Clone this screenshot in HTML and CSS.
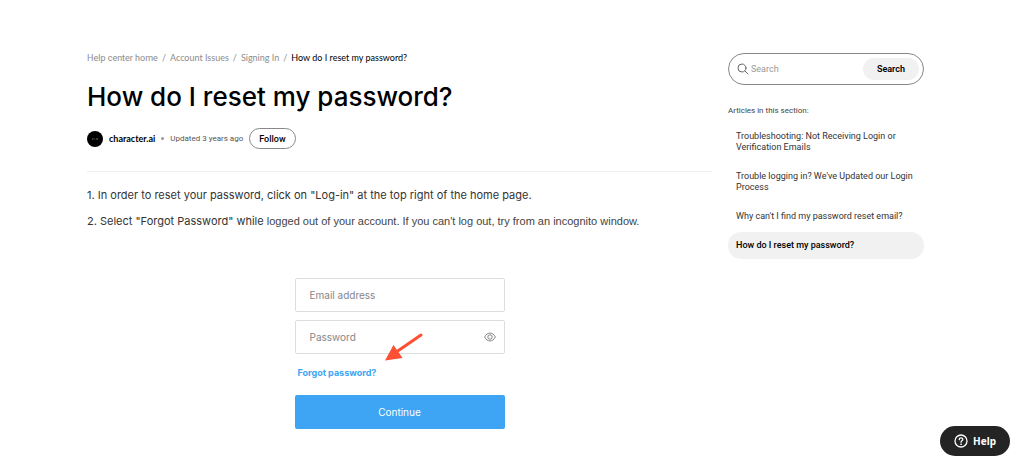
FILE: index.html
```html
<!DOCTYPE html>
<html lang="en">
  <head>
    <meta charset="utf-8">
    <meta name="viewport" content="width=device-width, initial-scale=1">
    <title>How do I reset my password?</title>
    <link rel="stylesheet" href="styles.css">
  </head>
  <body>
    <div class="page">
      <main class="article">
        <nav class="breadcrumbs">
          <a href="#" class="home">Help center home</a>
          <span>/</span>
          <a href="#">Account Issues</a>
          <span>/</span>
          <a href="#">Signing In</a>
          <span>/</span>
          <a href="#" class="here">How do I reset my password?</a>
        </nav>

        <h1>How do I reset my password?</h1>

        <div class="meta">
          <svg class="avatar" viewBox="0 0 16 16">
            <circle cx="8" cy="8" r="8" fill="#000"/>
            <path d="M5 7.5h1.5v1H5zM7.3 7.5h.8v1h-.8zM9 7.5h2v1H9z" fill="#777"/>
          </svg>
          <span class="author">character.ai</span>
          <span class="dot"></span>
          <span class="updated">Updated 3 years ago</span>
          <button type="button" class="follow">Follow</button>
        </div>

        <div class="content">
          <p>1. In order to reset your password, click on "Log-in" at the top right of the home page.</p>
          <p>2. Select "Forgot Password" while <span class="plain">logged out of your account. If you can't log out, try from an incognito window.</span></p>

          <form class="login">
            <input type="email" class="field" placeholder="Email address" aria-label="Email address">
            <div class="password">
              <input type="password" class="field" placeholder="Password" aria-label="Password">
              <svg class="eye" viewBox="0 0 12 10" fill="none" stroke="#85858a">
                <path d="M.6 5C2 2.4 3.8 1.1 6 1.1S10 2.4 11.4 5C10 7.6 8.2 8.9 6 8.9S2 7.6.6 5z"/>
                <circle cx="6" cy="5" r="2.2"/>
              </svg>
            </div>
            <a href="#" class="forgot">Forgot password?</a>
            <button type="button" class="continue">Continue</button>
            <svg class="arrow" viewBox="0 0 38 29">
              <path d="M36 2L12 18.5" stroke="#fd4f32" stroke-width="3" stroke-linecap="round"/>
              <path d="M0 27.5L8.5 12L17.5 25z" fill="#fd4f32"/>
            </svg>
          </form>
        </div>
      </main>

      <aside class="sidebar">
        <form class="search">
          <svg class="glass" viewBox="0 0 12 12" fill="none" stroke="#666" stroke-linecap="round">
            <circle cx="5" cy="5" r="4"/>
            <path d="M8 8l3 3"/>
          </svg>
          <input type="search" placeholder="Search" aria-label="Search">
          <button type="button">Search</button>
        </form>

        <h2>Articles in this section:</h2>
        <ul class="articles">
          <li><a href="#">Troubleshooting: Not Receiving Login or Verification Emails</a></li>
          <li><a href="#">Trouble logging in? We've Updated our Login Process</a></li>
          <li><a href="#">Why can't I find my password reset email?</a></li>
          <li><a href="#" class="active">How do I reset my password?</a></li>
        </ul>
      </aside>
    </div>

    <button type="button" class="help">
      <svg viewBox="0 0 14 14" fill="none" stroke="#fff" stroke-linecap="round">
        <circle cx="7" cy="7" r="6" stroke-width="1.3"/>
        <path d="M5.2 5.6C5.3 3.2 8.9 3.3 8.8 5.5C8.7 6.8 7 6.8 7 8.2" stroke-width="1.3"/>
        <circle cx="7" cy="10.2" r=".5" fill="#fff" stroke-width=".6"/>
      </svg>
      Help
    </button>
  </body>
</html>
```
FILE: styles.css
```css
* {
  box-sizing: border-box;
}

body {
  margin: 0;
  background-color: #fff;
  color: #000;
  font-family: Roboto, "Liberation Sans", sans-serif;
  font-size: 9px;
}

a {
  color: inherit;
  text-decoration: none;
}

button, input {
  font-family: inherit;
}

.page {
  display: grid;
  grid-template-columns: minmax(0, 1fr) 196px;
  gap: 16px;
  padding: 52px 100px 32px 87px;
}

/* article header */
.breadcrumbs {
  display: flex;
  gap: 4px;
  font-family: Lato, "Liberation Sans", sans-serif;
  line-height: 12px;
  color: #8c8c8c;
}

.breadcrumbs .home {
  font-family: Roboto, "Liberation Sans", sans-serif;
}

.breadcrumbs .here {
  color: #000;
}

h1 {
  margin: 16px 0 14px;
  font-family: Inter, "Liberation Sans", sans-serif;
  font-size: 26px;
  line-height: 34px;
  font-weight: 500;
}

.meta {
  display: flex;
  align-items: center;
  gap: 6px;
  padding-bottom: 22px;
  border-bottom: 1px solid #eee;
}

.avatar {
  width: 16px;
  height: 16px;
}

.author {
  font-family: Lato, "Liberation Sans", sans-serif;
  font-weight: 700;
}

.dot {
  width: 3px;
  height: 3px;
  border-radius: 50%;
  background-color: #999;
}

.updated {
  font-size: 8px;
  color: #555;
}

.follow {
  height: 21px;
  padding: 0 9px;
  border: 1px solid #888;
  border-radius: 11px;
  background-color: #fff;
  color: #000;
  font-size: 9px;
  font-weight: 500;
}

/* article body */
.content {
  padding-top: 13px;
  color: #333;
  font-size: 11px;
}

.content p {
  margin: 0 0 6px;
  font-family: Inter, "Liberation Sans", sans-serif;
  line-height: 20px;
}

.content .plain {
  color: #444;
  font-family: "Liberation Sans", sans-serif;
}

.login {
  position: relative;
  display: flex;
  flex-direction: column;
  gap: 8px;
  max-width: 210px;
  margin: 47px auto 0;
  font-family: Inter, "Liberation Sans", sans-serif;
}

.field {
  display: block;
  width: 100%;
  height: 34px;
  padding: 0 14px;
  border: 1px solid #ddd;
  border-radius: 2px;
  background-color: #fff;
  font-size: 10px;
}

.field::placeholder {
  color: #85858a;
  opacity: 1;
}

.password {
  position: relative;
}

.eye {
  position: absolute;
  top: 12px;
  right: 9px;
  width: 12px;
  height: 10px;
}

.forgot {
  padding: 3px 3px 6px;
  color: #3da5f4;
  font-size: 9px;
  line-height: 16px;
  font-weight: 700;
}

.continue {
  height: 34px;
  border: 0;
  border-radius: 2px;
  background-color: #3da5f4;
  color: #fff;
  font-size: 10px;
}

.arrow {
  position: absolute;
  top: 55px;
  left: 90px;
  width: 38px;
  height: 29px;
}

/* sidebar */
.search {
  display: flex;
  align-items: center;
  height: 32px;
  margin-top: 1px;
  padding: 0 4px 0 8px;
  border: 1px solid #888;
  border-radius: 16px;
}

.glass {
  flex: none;
  width: 12px;
  height: 12px;
}

.search input {
  flex: 1;
  min-width: 0;
  padding: 0 2px;
  border: 0;
  background: none;
  font-size: 9px;
}

.search input::placeholder {
  color: #999;
  opacity: 1;
}

.search button {
  height: 22px;
  padding: 0 14px;
  border: 0;
  border-radius: 11px;
  background-color: #f1f1f1;
  color: #000;
  font-size: 9px;
  font-weight: 600;
}

.sidebar h2 {
  margin: 20px 0 6px;
  color: #444;
  font-size: 8px;
  line-height: 12px;
  font-weight: 400;
}

.articles {
  display: grid;
  gap: 2px;
  margin: 0;
  padding: 0;
  list-style: none;
}

.articles a {
  display: block;
  padding: 8px;
  border-radius: 13px;
  color: #333;
  line-height: 11px;
}

.articles .active {
  background-color: #f1f1f1;
  color: #000;
  font-weight: 500;
}

/* floating help button */
.help {
  position: fixed;
  right: 14px;
  bottom: 7px;
  display: flex;
  align-items: center;
  gap: 5px;
  height: 30px;
  padding: 0 14px;
  border: 0;
  border-radius: 15px;
  background-color: #242424;
  color: #fff;
  font-family: "Noto Sans", sans-serif;
  font-size: 10px;
  font-weight: 700;
}

.help svg {
  width: 14px;
  height: 14px;
}
```
